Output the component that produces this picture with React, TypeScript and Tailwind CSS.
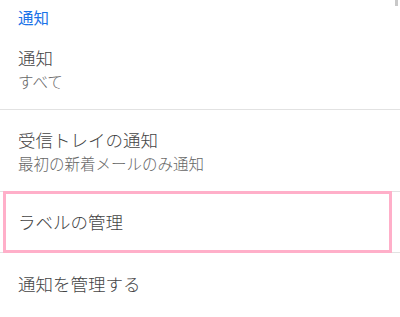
import React from "react";

const font = { fontFamily: '"Noto Sans CJK JP", "Noto Sans", sans-serif' };

export default function App() {
  return (
    <div className="relative w-[400px] h-[317px] bg-white overflow-hidden font-light" style={font}>
      <div className="absolute right-[2px] top-0 w-[3px] h-[6px] bg-[#c8c8c8]" />
      <div className="h-[28px] pl-[18px] pt-[7px] text-[15.5px] leading-[20px] text-[#1a73e8] font-normal">通知</div>
      <div className="h-[82px] border-b border-[#e2e2e2] pl-[18px] flex flex-col justify-center">
        <div className="text-[17.5px] leading-[24px] text-[#444444]">通知</div>
        <div className="text-[15.5px] leading-[22px] text-[#666666]">すべて</div>
      </div>
      <div className="h-[82px] border-b border-[#e2e2e2] pl-[18px] flex flex-col justify-center">
        <div className="text-[17.5px] leading-[24px] text-[#444444]">受信トレイの通知</div>
        <div className="text-[15.5px] leading-[22px] text-[#666666]">最初の新着メールのみ通知</div>
      </div>
      <div className="relative h-[61px] border-b border-[#e2e2e2] pl-[18px] flex items-center">
        <div className="text-[17.5px] leading-[24px] text-[#444444]">ラベルの管理</div>
        <div className="absolute left-[3px] right-[8px] top-[-1px] bottom-[-1px] border-[3px] border-[#ffafc9]" />
      </div>
      <div className="h-[61px] pl-[18px] flex items-center">
        <div className="text-[17.5px] leading-[24px] text-[#444444]">通知を管理する</div>
      </div>
    </div>
  );
}
